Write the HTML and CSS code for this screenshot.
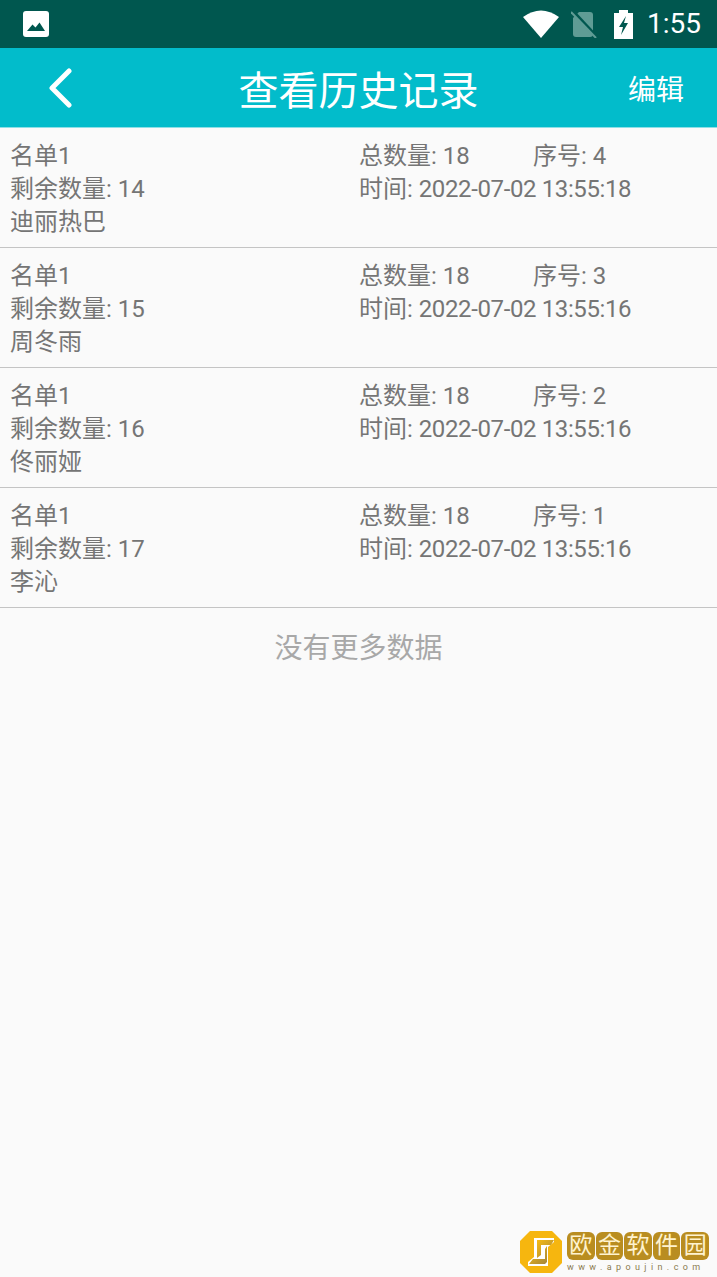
FILE: index.html
```html
<!DOCTYPE html>
<html lang="zh">
<head>
  <meta charset="UTF-8" />
  <meta name="viewport" content="width=device-width, initial-scale=1.0" />
  <title>查看历史记录</title>
  <link rel="stylesheet" href="styles.css">
</head>
<body>
  <div class="status-bar">
    <svg class="status-image" width="26" height="26" viewBox="0 0 26 26">
      <rect width="26" height="26" rx="3" fill="#fff"/>
      <path d="M4 20 L9.5 13.5 L12.5 16.5 L16.5 11.5 L22 20 Z" fill="#00574f"/>
    </svg>
    <div class="status-right">
      <svg width="36" height="28" viewBox="0 0 36 28">
        <path d="M0 7 Q18 -6 36 7 L18 28 Z" fill="#fff"/>
      </svg>
      <svg class="status-sim" width="27" height="28" viewBox="0 0 27 28">
        <path d="M8 2 H19 Q22 2 22 5 V24 Q22 27 19 27 H5 Q2 27 2 24 V8 Z" fill="#5f9c95"/>
        <path d="M1 0 L27 28" stroke="#00574f" stroke-width="3"/>
        <path d="M0 2 L25 28" stroke="#5f9c95" stroke-width="2"/>
      </svg>
      <svg class="status-battery" width="19" height="29" viewBox="0 0 19 29">
        <path d="M5 0 H14 V3 H19 V29 H0 V3 H5 Z" fill="#fff"/>
        <path d="M12 6 L5 17 H9 L7 25 L14 13 H10 Z" fill="#00574f"/>
      </svg>
      <span class="status-time">1:55</span>
    </div>
  </div>

  <header class="title-bar">
    <svg class="back-icon" width="26" height="40" viewBox="0 0 26 40">
      <path d="M22 3 L5 20 L22 37" fill="none" stroke="#fff" stroke-width="5" stroke-linecap="round" stroke-linejoin="round"/>
    </svg>
    <h1 class="title">查看历史记录</h1>
    <span class="edit">编辑</span>
  </header>

  <ul class="record-list">
    <li class="record">
      <div class="record-row">
        <span class="col-left">名单1</span>
        <span class="col-total">总数量: 18</span>
        <span>序号: 4</span>
      </div>
      <div class="record-row">
        <span class="col-left">剩余数量: 14</span>
        <span>时间: <span class="date">2022-07-02 13:55:18</span></span>
      </div>
      <div class="record-row">迪丽热巴</div>
    </li>
    <li class="record">
      <div class="record-row">
        <span class="col-left">名单1</span>
        <span class="col-total">总数量: 18</span>
        <span>序号: 3</span>
      </div>
      <div class="record-row">
        <span class="col-left">剩余数量: 15</span>
        <span>时间: <span class="date">2022-07-02 13:55:16</span></span>
      </div>
      <div class="record-row">周冬雨</div>
    </li>
    <li class="record">
      <div class="record-row">
        <span class="col-left">名单1</span>
        <span class="col-total">总数量: 18</span>
        <span>序号: 2</span>
      </div>
      <div class="record-row">
        <span class="col-left">剩余数量: 16</span>
        <span>时间: <span class="date">2022-07-02 13:55:16</span></span>
      </div>
      <div class="record-row">佟丽娅</div>
    </li>
    <li class="record">
      <div class="record-row">
        <span class="col-left">名单1</span>
        <span class="col-total">总数量: 18</span>
        <span>序号: 1</span>
      </div>
      <div class="record-row">
        <span class="col-left">剩余数量: 17</span>
        <span>时间: <span class="date">2022-07-02 13:55:16</span></span>
      </div>
      <div class="record-row">李沁</div>
    </li>
  </ul>

  <div class="no-more">没有更多数据</div>

  <div class="watermark">
    <svg class="wm-logo" width="42" height="42" viewBox="0 0 42 42">
      <defs>
        <linearGradient id="wmBar" x1="0" y1="0" x2="1" y2="1">
          <stop offset="0" stop-color="#f7bb12"/>
          <stop offset="1" stop-color="#a5873c"/>
        </linearGradient>
      </defs>
      <path d="M10 0 H32 L42 10 V32 L32 42 H10 L0 32 V10 Z" fill="#f6b60f"/>
      <rect x="8" y="7" width="26" height="28" fill="#fff"/>
      <path d="M8 7 H14 V26 L8 31 Z" fill="#f6b60f"/>
      <path d="M34 35 H28 V16 L34 11 Z" fill="#f6b60f"/>
      <path d="M17 9 H34 L31 14 H21 V24 L17 27 Z" fill="url(#wmBar)"/>
      <path d="M25 33 H9 L13 28 H25 V18 L27 15 V31 Z" fill="url(#wmBar)"/>
    </svg>
    <div class="wm-text">
      <div class="wm-name">
        <span>欧</span><span>金</span><span>软</span><span>件</span><span>园</span>
      </div>
      <div class="wm-url">www.apoujin.com</div>
    </div>
  </div>
</body>
</html>
```

FILE: styles.css
```css
* {
  margin: 0;
  padding: 0;
  box-sizing: border-box;
}

body {
  width: 717px;
  height: 1277px;
  position: relative;
  overflow: hidden;
  background: #fafafa;
  color: #757575;
  font-family: Roboto, "Noto Sans CJK SC", sans-serif;
}

.status-bar {
  height: 48px;
  background: #00574f;
  display: flex;
  align-items: center;
  justify-content: space-between;
  padding: 0 16px 0 23px;
  color: #fff;
}

.status-right {
  display: flex;
  align-items: center;
}

.status-sim {
  margin-left: 12px;
}

.status-battery {
  margin-left: 16px;
}

.status-time {
  margin-left: 14px;
  font-size: 28px;
  line-height: 48px;
}

.title-bar {
  height: 80px;
  background: #02bccb;
  display: grid;
  grid-template-columns: 1fr auto 1fr;
  align-items: center;
  padding: 0 33px;
  color: #fff;
  border-bottom: 1px solid #8fdfe6;
}

.back-icon {
  margin-left: 14px;
}

.title {
  font-size: 40px;
  font-weight: 400;
}

.edit {
  font-size: 28px;
  justify-self: end;
}

.record-list {
  list-style: none;
}

.record {
  height: 120px;
  padding: 12px 10px 0;
  border-bottom: 1px solid #c4c4c4;
}

.record-row {
  display: flex;
  font-size: 24px;
  line-height: 33px;
}

.col-left {
  width: 349px;
}

.col-total {
  width: 174px;
}

.date {
  letter-spacing: -0.38px;
}

.no-more {
  margin-top: 23px;
  text-align: center;
  font-size: 28px;
  line-height: 36px;
  color: #a8a8a8;
}

.watermark {
  position: absolute;
  right: 8px;
  bottom: 4px;
  display: flex;
  align-items: center;
  gap: 5px;
}

.wm-text {
  width: 142px;
}

.wm-name {
  display: flex;
  gap: 1px;
}

.wm-name span {
  width: 28px;
  height: 28px;
  border-radius: 6px;
  background: #b98d20;
  color: #fff3cf;
  font-size: 23px;
  line-height: 28px;
  text-align: center;
}

.wm-url {
  margin-top: 2px;
  font-size: 9px;
  line-height: 10px;
  letter-spacing: 4.4px;
  color: #8a7a50;
  white-space: nowrap;
}
```
